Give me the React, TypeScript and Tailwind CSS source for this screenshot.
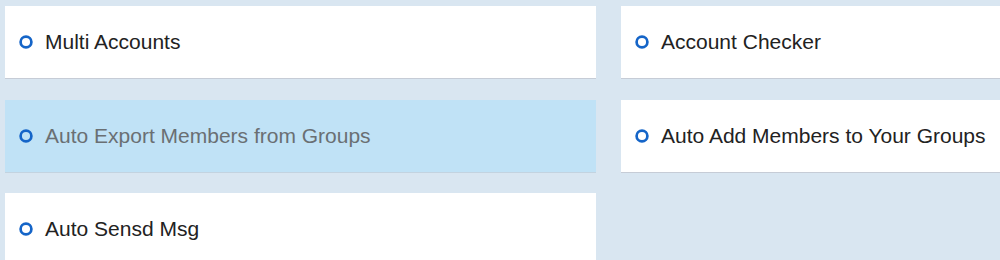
import React from "react";

const items = [
  { label: "Multi Accounts" },
  { label: "Account Checker" },
  { label: "Auto Export Members from Groups", active: true },
  { label: "Auto Add Members to Your Groups" },
  { label: "Auto Sensd Msg" },
];

function Ring() {
  return (
    <svg width="14" height="14" viewBox="0 0 14 14" className="shrink-0">
      <circle cx="7" cy="7" r="5.4" fill="none" stroke="#1565c8" strokeWidth="2.7" />
    </svg>
  );
}

export default function App() {
  return (
    <div
      className="h-[260px] w-[1000px] overflow-hidden bg-[#d9e6f1] pl-[5px] pt-[6px]"
      style={{ fontFamily: '"Liberation Sans", Arial, sans-serif' }}
    >
      <div className="grid w-[1210px] grid-cols-[591px_591px] gap-x-[25px] gap-y-[20.5px]">
        {items.map((item) => (
          <div
            key={item.label}
            className={
              item.active
                ? "flex h-[73px] items-center gap-[12px] border-b border-[#c3d3e0] bg-[#c0e2f6] pl-[14px] text-[21px] text-[#6a6f73]"
                : "flex h-[73px] items-center gap-[12px] border-b border-[#c6ccd6] bg-white pl-[14px] text-[21px] text-[#222]"
            }
          >
            <Ring />
            <span>{item.label}</span>
          </div>
        ))}
      </div>
    </div>
  );
}
